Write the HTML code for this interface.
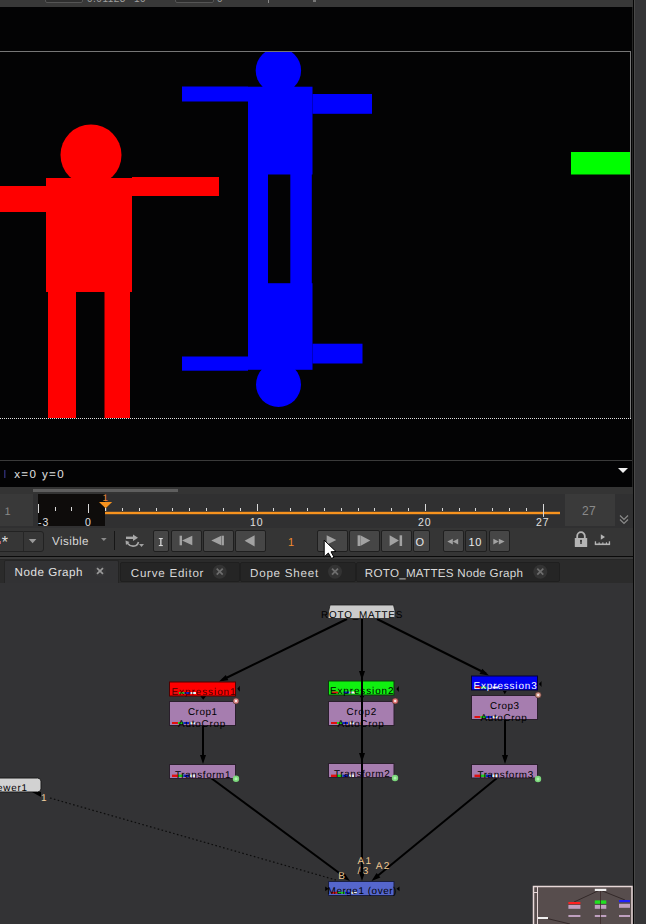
<!DOCTYPE html>
<html><head><meta charset="utf-8">
<style>
html,body{margin:0;padding:0;}
body{width:646px;height:924px;overflow:hidden;position:relative;background:#333335;font-family:"Liberation Sans",sans-serif;}
.a{position:absolute;}
.btn{position:absolute;top:530px;height:22px;background:#464646;border:1px solid #1f1f1f;border-radius:2px;box-sizing:border-box;}
.t{position:absolute;white-space:nowrap;line-height:1;}
.tab{position:absolute;top:561.5px;height:20px;background:#252525;border:1px solid #1f1f1f;border-radius:2px;box-sizing:border-box;}
svg{position:absolute;left:0;top:0;}
</style></head>
<body>
<!-- top strip -->
<div class="a" style="left:0;top:0;width:646px;height:7px;background:#383838"></div>
<div class="a" style="left:45px;top:-4px;width:38px;height:7px;background:#2e2e2e;border:1px solid #555;box-sizing:border-box;border-radius:2px"></div>
<div class="a" style="left:175px;top:-4px;width:39px;height:7px;background:#2e2e2e;border:1px solid #555;box-sizing:border-box;border-radius:2px"></div>

<div class="t" style="left:87px;top:-6.5px;font-size:10px;letter-spacing:0.5px;color:#a0a0a0">0.01123</div>
<div class="t" style="left:134px;top:-6.5px;font-size:10px;letter-spacing:0.5px;color:#a0a0a0">10</div>
<div class="t" style="left:217px;top:-6.5px;font-size:10px;color:#a0a0a0">0</div>
<div class="a" style="left:268px;top:0;width:1px;height:3px;background:#888"></div>
<div class="a" style="left:313px;top:0;width:3px;height:2px;background:#777"></div>
<!-- viewer -->
<div class="a" style="left:0;top:7px;width:632px;height:480px;background:#030304"></div>
<!-- right sliver panel -->
<div class="a" style="left:633px;top:0;width:1px;height:924px;background:#050505"></div>
<div class="a" style="left:632px;top:7px;width:1px;height:480px;background:#262626"></div>
<div class="a" style="left:634px;top:0;width:1px;height:924px;background:#484848"></div>
<div class="a" style="left:635px;top:0;width:11px;height:924px;background:#353537"></div>

<!-- timeline region -->
<div class="a" style="left:0;top:487px;width:633px;height:41px;background:#303031"></div>
<div class="a" style="left:0;top:487px;width:633px;height:7px;background:#343434"></div>
<div class="a" style="left:33px;top:489px;width:145px;height:3px;background:#5e5e5e"></div>
<div class="a" style="left:0;top:494px;width:33px;height:32px;background:#393939"></div>
<div class="a" style="left:38px;top:494px;width:67px;height:32px;background:#0e0c0b"></div>
<div class="a" style="left:565px;top:494px;width:50px;height:32px;background:#3a3a3a"></div>

<!-- toolbar -->
<div class="a" style="left:0;top:528px;width:633px;height:28px;background:#353535"></div>
<div class="a" style="left:0;top:556px;width:633px;height:1px;background:#0a0a0a"></div>
<!-- tab bar -->
<div class="a" style="left:0;top:557px;width:633px;height:26px;background:#2b2b2b"></div>
<div class="a" style="left:0;top:557px;width:633px;height:2px;background:#3a3a3a"></div>
<div class="a" style="left:0;top:559px;width:633px;height:1px;background:#262626"></div>
<div class="tab" style="left:119.5px;width:120px"></div>
<div class="tab" style="left:239.5px;width:116px"></div>
<div class="tab" style="left:355.5px;width:204px"></div>
<div class="a" style="left:4px;top:559.5px;width:114.5px;height:23.5px;background:#323234;border:1px solid #242424;border-bottom:none;border-radius:2px 2px 0 0;box-sizing:border-box"></div>

<svg width="646" height="924">
  <!-- viewer content -->
  <g fill="#ff0000">
    <circle cx="91" cy="155" r="30.5"/>
    <rect x="46" y="178" width="86" height="114"/>
    <rect x="0" y="186" width="46" height="26"/>
    <rect x="132" y="177" width="87" height="19"/>
    <rect x="48" y="292" width="28" height="126"/>
    <rect x="104.5" y="292" width="25.5" height="126"/>
  </g>
  <g fill="#0000ff">
    <clipPath id="vc"><rect x="0" y="52" width="631" height="367"/></clipPath><circle cx="278.4" cy="70.5" r="22.7" clip-path="url(#vc)"/>
    <rect x="182" y="86.5" width="66" height="15"/>
    <rect x="248" y="86.7" width="64.5" height="87.8"/>
    <rect x="312.5" y="94" width="59.5" height="19.8"/>
    <rect x="248" y="174" width="20" height="110"/>
    <rect x="290.3" y="174" width="21.5" height="110"/>
    <rect x="248" y="283.2" width="64.5" height="86.6"/>
    <rect x="312.5" y="343.7" width="50" height="19.8"/>
    <rect x="182" y="356.5" width="66" height="14.2"/>
    <circle cx="278.5" cy="384.5" r="22.5"/>
  </g>
  <rect x="571" y="152" width="59.5" height="22.5" fill="#00ff00"/>
  <!-- frame -->
  <line x1="0" y1="51.5" x2="631" y2="51.5" stroke="#767676" stroke-width="1"/>
  <line x1="630.5" y1="51" x2="630.5" y2="418" stroke="#767676" stroke-width="1"/>
  <line x1="0" y1="418.5" x2="631" y2="418.5" stroke="#e0e0e0" stroke-width="1" stroke-dasharray="1 1"/>
  <line x1="0" y1="460.5" x2="632" y2="460.5" stroke="#3a3a3a" stroke-width="1"/>
  <polygon points="618,468 628,468 623,473" fill="#f0f0f0"/>
  <rect x="4" y="470" width="1.5" height="8" fill="#2a2a6a"/>

  <!-- timeline -->
  <g fill="#d8d8d8">
    <rect x="38" y="504" width="1" height="9"/>
    <rect x="55" y="507" width="1" height="4"/>
    <rect x="71" y="507" width="1" height="4"/>
    <rect x="88" y="504" width="1" height="9"/>
    <rect x="122" y="508" width="1" height="3"/>
    <rect x="139" y="508" width="1" height="3"/>
    <rect x="156" y="508" width="1" height="3"/>
    <rect x="172" y="508" width="1" height="3"/>
    <rect x="189" y="508" width="1" height="3"/>
    <rect x="206" y="508" width="1" height="3"/>
    <rect x="223" y="508" width="1" height="3"/>
    <rect x="240" y="508" width="1" height="3"/>
    <rect x="257" y="504" width="1" height="7"/>
    <rect x="273" y="508" width="1" height="3"/>
    <rect x="290" y="508" width="1" height="3"/>
    <rect x="307" y="508" width="1" height="3"/>
    <rect x="324" y="508" width="1" height="3"/>
    <rect x="341" y="508" width="1" height="3"/>
    <rect x="358" y="508" width="1" height="3"/>
    <rect x="374" y="508" width="1" height="3"/>
    <rect x="391" y="508" width="1" height="3"/>
    <rect x="408" y="508" width="1" height="3"/>
    <rect x="425" y="504" width="1" height="7"/>
    <rect x="442" y="508" width="1" height="3"/>
    <rect x="459" y="508" width="1" height="3"/>
    <rect x="475" y="508" width="1" height="3"/>
    <rect x="492" y="508" width="1" height="3"/>
    <rect x="509" y="508" width="1" height="3"/>
    <rect x="526" y="508" width="1" height="3"/>
    <rect x="543" y="504" width="1" height="12.7"/>
  </g>
  <rect x="105" y="511.8" width="455" height="2.4" fill="#f7931e"/>
  <rect x="543" y="511" width="1" height="5.7" fill="#d8d8d8"/>
  <polygon points="99,502 112.2,502 105.6,508.3" fill="#f7931e"/>
  <rect x="105" y="508" width="1.2" height="3" fill="#e0e0e0"/>
  <!-- chevron -->
  <g fill="none" stroke="#8a8a8a" stroke-width="1.2">
    <polyline points="620,515.5 624,519.5 628,515.5"/>
    <polyline points="620,519.5 624,523.5 628,519.5"/>
  </g>
</svg>

<div class="t" style="left:14.2px;top:469.1px;font-size:11.6px;letter-spacing:1.37px;color:#e0e0e0;text-rendering:geometricPrecision;">x=0 y=0</div>
<!-- timeline labels -->
<div class="t" style="left:4.5px;top:506.5px;font-size:11px;color:#8a8a8a;text-rendering:geometricPrecision">1</div>
<div class="t" style="left:102.5px;top:494px;font-size:9.6px;color:#f08a30;text-rendering:geometricPrecision">1</div>
<div class="t" style="left:38px;top:516.5px;font-size:10.5px;color:#e0e0e0;letter-spacing:1px">-3</div>
<div class="t" style="left:85px;top:516.5px;font-size:10.5px;color:#e0e0e0">0</div>
<div class="t" style="left:250px;top:516.5px;font-size:10.5px;color:#e0e0e0;letter-spacing:1px">10</div>
<div class="t" style="left:418px;top:516.5px;font-size:10.5px;color:#e0e0e0;letter-spacing:1px">20</div>
<div class="t" style="left:536px;top:516.5px;font-size:10.5px;color:#e0e0e0;letter-spacing:1px">27</div>
<div class="t" style="left:582px;top:505px;font-size:12px;color:#8a8a8a;letter-spacing:0.3px">27</div>


<!-- toolbar controls -->
<div class="a" style="left:-3px;top:530.5px;width:47px;height:21px;background:#363636;border:1px solid #222;border-radius:3px;box-sizing:border-box"></div>
<div class="a" style="left:23px;top:531px;width:1px;height:20px;background:#262626"></div>
<div class="t" style="left:1.8px;top:535.3px;font-size:16px;color:#dcdcdc">*</div>
<div class="a" style="left:0;top:541px;width:1px;height:3px;background:#c06060"></div>
<div class="t" style="left:52px;top:536px;font-size:11.6px;letter-spacing:0.43px;color:#d8d8d8;text-rendering:geometricPrecision;">Visible</div>
<div class="a" style="left:113.5px;top:531px;width:1.2px;height:19px;background:#161616"></div>
<div class="btn" style="left:152.5px;width:16.5px"></div>
<div class="btn" style="left:170.5px;width:31px"></div>
<div class="btn" style="left:202.5px;width:31px"></div>
<div class="btn" style="left:234.5px;width:31px"></div>
<div class="btn" style="left:316.5px;width:31px"></div>
<div class="btn" style="left:348.5px;width:31px"></div>
<div class="btn" style="left:380.5px;width:31px"></div>
<div class="btn" style="left:412.5px;width:17px"></div>
<div class="btn" style="left:442.5px;width:21px"></div>
<div class="btn" style="left:464.8px;width:22px;background:#383838"></div>
<div class="btn" style="left:488.5px;width:21px"></div>
<div class="t" style="left:288px;top:536.5px;font-size:11px;color:#f08a30">1</div>
<div class="t" style="left:415.5px;top:536.8px;font-size:11px;color:#e8e8e8">O</div>
<div class="t" style="left:468.5px;top:536.5px;font-size:11px;letter-spacing:0.6px;color:#e8e8e8">10</div>
<svg width="646" height="924">
  <polygon points="28.8,539 36.4,539 32.6,543.2" fill="#9a9a9a"/>
  <polygon points="101,538 106.7,538 103.85,541" fill="#8a8a8a"/>
  <!-- sync icon -->
  <g fill="#a8a8a8" stroke="none">
    <rect x="126" y="536.6" width="8" height="2.4"/>
    <polygon points="133,534.5 138,537.8 133,541"/>
  </g>
  <path d="M127,543 Q131,547.5 136,545.5 Q138,544.5 138.5,542" fill="none" stroke="#a8a8a8" stroke-width="1.6"/>
  <polygon points="125.5,540.5 129.5,542 126,545" fill="#a8a8a8"/>
  <polygon points="139,544 144,544 141.5,547" fill="#a0a0a0"/>
  <!-- I glyph -->
  <g fill="#d8d8d8">
    <rect x="160.2" y="538" width="1.3" height="8"/>
    <rect x="158.8" y="538" width="4" height="1.1"/>
    <rect x="158.8" y="545" width="4" height="1.1"/>
  </g>
  <g fill="#a2a2a2">
    <!-- skip start -->
    <rect x="179.6" y="535.7" width="2.4" height="9.6"/>
    <polygon points="182,540.5 192.3,535.7 192.3,545.3"/>
    <!-- prev key -->
    <polygon points="211.3,540.5 221.2,535.7 221.2,545.3"/>
    <rect x="221.6" y="535.7" width="2.3" height="9.6"/>
    <!-- prev -->
    <polygon points="244.6,540.8 254.6,535.3 254.6,546.4"/>
    <!-- play -->
    <polygon points="326.7,535.2 336.3,540 326.7,544.8"/>
    <!-- next key -->
    <rect x="357.6" y="535.3" width="2.4" height="10.7"/>
    <polygon points="360.3,535.3 370.3,540.6 360.3,546"/>
    <!-- skip end -->
    <polygon points="389.6,535.3 398.9,540.6 389.6,546"/>
    <rect x="399.6" y="535.3" width="2.5" height="10.7"/>
    <!-- rewind 10 -->
    <polygon points="447.3,541.6 452.8,538.7 452.8,544.6"/>
    <polygon points="452.8,541.6 458.2,538.7 458.2,544.6"/>
    <!-- ff 10 -->
    <polygon points="493.3,538.7 498.8,541.6 493.3,544.6"/>
    <polygon points="498.8,538.7 504.6,541.6 498.8,544.6"/>
  </g>
  <!-- lock -->
  <g fill="#b4b4b4">
    <rect x="574.8" y="538" width="12.4" height="9" rx="0.6"/>
    <path d="M577.2,538 V536 A3.8,3.8 0 0 1 584.8,536 V538" fill="none" stroke="#b4b4b4" stroke-width="1.8"/>
  </g>
  <rect x="580.3" y="540.5" width="1.4" height="3.5" fill="#323232"/>
  <circle cx="581" cy="540.8" r="1" fill="#323232"/>
  <!-- ruler -->
  <g fill="#b4b4b4">
    <polygon points="600.8,534.2 605,537 600.8,539.7"/>
    <rect x="594.8" y="543.5" width="15.3" height="1.6"/>
    <rect x="594.8" y="541.3" width="1.3" height="3"/>
    <rect x="598.6" y="542.3" width="1.1" height="2"/>
    <rect x="602.3" y="542.3" width="1.1" height="2"/>
    <rect x="605.9" y="542.3" width="1.1" height="2"/>
    <rect x="608.8" y="541.3" width="1.3" height="3"/>
  </g>
  <!-- mouse cursor -->
  <path d="M324.2,540.2 L324.2,557 L328.3,553 L331.5,558.5 L334,557.2 L331,551.8 L336,551.5 Z" fill="#ffffff" stroke="#000" stroke-width="1"/>
</svg>
<!-- tabs text -->
<div class="t" style="left:14.6px;top:567.1px;font-size:11.6px;letter-spacing:0.53px;color:#e0e0e0;text-rendering:geometricPrecision;">Node Graph</div>
<div class="t" style="left:130.8px;top:567.7px;font-size:11.6px;letter-spacing:0.75px;color:#d8d8d8;text-rendering:geometricPrecision;">Curve Editor</div>
<div class="t" style="left:250px;top:567.7px;font-size:11.6px;letter-spacing:0.78px;color:#d8d8d8;text-rendering:geometricPrecision;">Dope Sheet</div>
<div class="t" style="left:364.8px;top:568.1px;font-size:11.6px;letter-spacing:0.28px;color:#d8d8d8;text-rendering:geometricPrecision;">ROTO_MATTES Node Graph</div>
<svg width="646" height="924">
  <circle cx="100" cy="571" r="6" fill="#363638"/>
  <g stroke="#9a9a9a" stroke-width="1.7">
    <line x1="97" y1="568.2" x2="103" y2="573.8"/><line x1="103" y1="568.2" x2="97" y2="573.8"/>
  </g>
  <g>
    <circle cx="219.7" cy="571.7" r="7" fill="#333333"/>
    <circle cx="335" cy="571.7" r="7" fill="#333333"/>
    <circle cx="540.3" cy="571.7" r="7" fill="#333333"/>
  </g>
  <g stroke="#6e6e6e" stroke-width="1.7">
    <line x1="216.7" y1="568.7" x2="222.7" y2="574.7"/><line x1="222.7" y1="568.7" x2="216.7" y2="574.7"/>
    <line x1="332" y1="568.7" x2="338" y2="574.7"/><line x1="338" y1="568.7" x2="332" y2="574.7"/>
    <line x1="537.3" y1="568.7" x2="543.3" y2="574.7"/><line x1="543.3" y1="568.7" x2="537.3" y2="574.7"/>
  </g>
</svg>

<svg width="646" height="924">
<line x1="347" y1="619" x2="222" y2="680" stroke="#000" stroke-width="2"/>
<polygon points="219.0,681.5 225.8,674.9 228.4,680.2" fill="#000"/>
<line x1="377" y1="619" x2="486" y2="673.5" stroke="#000" stroke-width="2"/>
<polygon points="489.0,675.5 479.6,674.1 482.3,668.8" fill="#000"/>
<line x1="203" y1="725" x2="203" y2="757" stroke="#000" stroke-width="2"/>
<polygon points="203.0,764.0 200.0,755.0 206.0,755.0" fill="#000"/>
<line x1="505" y1="719" x2="505" y2="757" stroke="#000" stroke-width="2"/>
<polygon points="505.0,764.0 502.0,755.0 508.0,755.0" fill="#000"/>
<line x1="211" y1="778" x2="346" y2="878" stroke="#000" stroke-width="2"/>
<polygon points="350.0,881.0 341.0,878.1 344.6,873.2" fill="#000"/>
<line x1="497" y1="778" x2="375" y2="878" stroke="#000" stroke-width="2"/>
<polygon points="371.5,881.0 376.6,873.0 380.4,877.6" fill="#000"/>
<line x1="50" y1="798" x2="336" y2="880" stroke="#0c0c0c" stroke-width="1.2" stroke-dasharray="1.6 2.4"/>
<path d="M328,618.5 L328.5,612 L330,605 L393.5,605 L395,611 L394.8,618.5 Z" fill="#cbcbcb" stroke="#1e1e1e" stroke-width="0.8"/>
<rect x="169.5" y="682" width="66.0" height="14" fill="#ff0000" stroke="#500000" stroke-width="1"/>
<rect x="169.5" y="701.5" width="66.0" height="24.0" fill="#a67daf" stroke="#2a1f2c" stroke-width="1"/>
<rect x="169.5" y="764.5" width="66.0" height="14.0" fill="#a67daf" stroke="#2a1f2c" stroke-width="1"/>
<rect x="328.5" y="681" width="65.5" height="14" fill="#10f010" stroke="#0a3a0a" stroke-width="1"/>
<rect x="328.5" y="701.5" width="65.5" height="24.0" fill="#a67daf" stroke="#2a1f2c" stroke-width="1"/>
<rect x="328.5" y="763.5" width="65.5" height="14.0" fill="#a67daf" stroke="#2a1f2c" stroke-width="1"/>
<rect x="471.5" y="676" width="66.0" height="14" fill="#0000f0" stroke="#00003a" stroke-width="1"/>
<rect x="471.5" y="695.5" width="66.0" height="24.0" fill="#a67daf" stroke="#2a1f2c" stroke-width="1"/>
<rect x="471.5" y="764.5" width="66.0" height="13.5" fill="#a67daf" stroke="#2a1f2c" stroke-width="1"/>
<rect x="328.5" y="881.5" width="65.5" height="14.0" fill="#5566cc" stroke="#1a1f40" stroke-width="1"/>
<path d="M-5,778 L37.5,778 Q40.5,778 41,781 L41,789 Q40.5,792 37.5,792 L-5,792 Z" fill="#d2d2d2" stroke="#1a1a1a" stroke-width="1"/>
<polygon points="32,792 41,792 41,797" fill="#000"/>
<rect x="173" y="692" width="6" height="2" fill="#e01010"/><rect x="179" y="692" width="5.5" height="2" fill="#20d020"/><rect x="184.5" y="692" width="6" height="2" fill="#1020d0"/><rect x="190.5" y="692" width="5.5" height="2" fill="#f0f0f0"/>
<rect x="172" y="722" width="6" height="2" fill="#e01010"/><rect x="178" y="722" width="5.5" height="2" fill="#20d020"/><rect x="183.5" y="722" width="6" height="2" fill="#1020d0"/><rect x="189.5" y="722" width="5.5" height="2" fill="#f0f0f0"/>
<rect x="172" y="774.6" width="6" height="2.4" fill="#e01010"/><rect x="178" y="774.6" width="5.5" height="2.4" fill="#20d020"/><rect x="183.5" y="774.6" width="6" height="2.4" fill="#1020d0"/><rect x="189.5" y="774.6" width="5.5" height="2.4" fill="#f0f0f0"/>
<rect x="332" y="691.5" width="6" height="2" fill="#e01010"/><rect x="338" y="691.5" width="5.5" height="2" fill="#20d020"/><rect x="343.5" y="691.5" width="6" height="2" fill="#1020d0"/><rect x="349.5" y="691.5" width="5.5" height="2" fill="#f0f0f0"/>
<rect x="331" y="722" width="6" height="2" fill="#e01010"/><rect x="337" y="722" width="5.5" height="2" fill="#20d020"/><rect x="342.5" y="722" width="6" height="2" fill="#1020d0"/><rect x="348.5" y="722" width="5.5" height="2" fill="#f0f0f0"/>
<rect x="331" y="774.6" width="6" height="2.4" fill="#e01010"/><rect x="337" y="774.6" width="5.5" height="2.4" fill="#20d020"/><rect x="342.5" y="774.6" width="6" height="2.4" fill="#1020d0"/><rect x="348.5" y="774.6" width="5.5" height="2.4" fill="#f0f0f0"/>
<rect x="475" y="686.5" width="6" height="2" fill="#e01010"/><rect x="481" y="686.5" width="5.5" height="2" fill="#20d020"/><rect x="486.5" y="686.5" width="6" height="2" fill="#1020d0"/><rect x="492.5" y="686.5" width="5.5" height="2" fill="#f0f0f0"/>
<rect x="474.5" y="716" width="6" height="2" fill="#e01010"/><rect x="480.5" y="716" width="5.5" height="2" fill="#20d020"/><rect x="486.0" y="716" width="6" height="2" fill="#1020d0"/><rect x="492.0" y="716" width="5.5" height="2" fill="#f0f0f0"/>
<rect x="474.5" y="774.6" width="6" height="2.4" fill="#e01010"/><rect x="480.5" y="774.6" width="5.5" height="2.4" fill="#20d020"/><rect x="486.0" y="774.6" width="6" height="2.4" fill="#1020d0"/><rect x="492.0" y="774.6" width="5.5" height="2.4" fill="#f0f0f0"/>
<rect x="331" y="891.8" width="6.4" height="2" fill="#e01010"/><rect x="337.4" y="891.8" width="7.6" height="2" fill="#20d020"/><rect x="345" y="891.8" width="5.6" height="2" fill="#1020d0"/><rect x="350.6" y="891.8" width="6.4" height="2" fill="#f0f0f0"/>
<polygon points="200.4,696.3 206,696.3 203.2,699.8" fill="#000"/>
<polygon points="359.7,696 364.3,696 362,699.3" fill="#000"/>
<polygon points="502.9,691 506.7,691 504.8,694.3" fill="#000"/>
<polygon points="237.3,688.7 239.8,685.7 239.8,691.7" fill="#000"/>
<polygon points="396.3,689 398.8,686 398.8,692" fill="#000"/>
<polygon points="539,684 541.5,681 541.5,687" fill="#000"/>
<polygon points="325.2,886.4 328.5,888.8 325.2,891.3" fill="#000"/>
<polygon points="399.5,886.4 396.5,888.8 399.5,891.3" fill="#000"/>
<circle cx="236" cy="701" r="3" fill="#d88080" stroke="#4a2a2a" stroke-width="0.6"/><circle cx="236" cy="701" r="1.2" fill="#f4e8e8"/>
<circle cx="395.2" cy="701" r="3" fill="#e07070" stroke="#4a2a2a" stroke-width="0.6"/><circle cx="395.2" cy="701" r="1.2" fill="#f4e8e8"/>
<circle cx="538.2" cy="695" r="3" fill="#c89080" stroke="#4a2a2a" stroke-width="0.6"/><circle cx="538.2" cy="695" r="1.2" fill="#f4e8e8"/>
<circle cx="236" cy="778.7" r="3.2" fill="#7cd87c"/><circle cx="236" cy="778.7" r="1.5" fill="#b0f0b0"/>
<circle cx="395" cy="778" r="3.2" fill="#7cd87c"/><circle cx="395" cy="778" r="1.5" fill="#b0f0b0"/>
<circle cx="538" cy="779" r="3.2" fill="#7cd87c"/><circle cx="538" cy="779" r="1.5" fill="#b0f0b0"/>
<line x1="362" y1="619" x2="362" y2="873" stroke="#000" stroke-width="2"/>
<polygon points="362.0,680.0 359.0,671.0 365.0,671.0" fill="#000"/>
<polygon points="362.0,762.0 359.0,753.0 365.0,753.0" fill="#000"/>
<polygon points="362.0,881.0 359.0,872.0 365.0,872.0" fill="#000"/>
</svg>

<div class="t" style="left:321px;top:611px;font-size:9.9px;letter-spacing:0.82px;color:#000;text-rendering:geometricPrecision;">ROTO_MATTES</div>
<div class="t" style="left:171.5px;top:688px;font-size:9.9px;letter-spacing:0.97px;color:#4a0000;text-rendering:geometricPrecision;">Expression1</div>
<div class="t" style="left:187.9px;top:708px;font-size:9.9px;letter-spacing:0.55px;color:#000;text-rendering:geometricPrecision;">Crop1</div>
<div class="t" style="left:178px;top:720px;font-size:9.9px;letter-spacing:0.79px;color:#000;text-rendering:geometricPrecision;">AutoCrop</div>
<div class="t" style="left:175px;top:771.2px;font-size:9.9px;letter-spacing:0.59px;color:#000;text-rendering:geometricPrecision;">Transform1</div>
<div class="t" style="left:330px;top:686.5px;font-size:9.9px;letter-spacing:0.91px;color:#000;text-rendering:geometricPrecision;">Expression2</div>
<div class="t" style="left:346.5px;top:708px;font-size:9.9px;letter-spacing:0.72px;color:#000;text-rendering:geometricPrecision;">Crop2</div>
<div class="t" style="left:337.4px;top:720.2px;font-size:9.9px;letter-spacing:0.66px;color:#000;text-rendering:geometricPrecision;">AutoCrop</div>
<div class="t" style="left:334px;top:770.3px;font-size:9.9px;letter-spacing:0.62px;color:#000;text-rendering:geometricPrecision;">Transform2</div>
<div class="t" style="left:473.6px;top:681.8px;font-size:9.9px;letter-spacing:0.87px;color:#ffffff;text-rendering:geometricPrecision;">Expression3</div>
<div class="t" style="left:490px;top:702px;font-size:9.9px;letter-spacing:0.55px;color:#000;text-rendering:geometricPrecision;">Crop3</div>
<div class="t" style="left:480.6px;top:714px;font-size:9.9px;letter-spacing:0.63px;color:#000;text-rendering:geometricPrecision;">AutoCrop</div>
<div class="t" style="left:477.4px;top:770.8px;font-size:9.9px;letter-spacing:0.63px;color:#000;text-rendering:geometricPrecision;">Transform3</div>
<div class="t" style="left:327.6px;top:887.4px;font-size:9.9px;letter-spacing:0.56px;color:#000;text-rendering:geometricPrecision;">Merge1 (over)</div>
<div class="t" style="left:-13px;top:783.9px;font-size:9.9px;letter-spacing:0.75px;color:#000;text-rendering:geometricPrecision;">Viewer1</div>
<div class="t" style="left:41px;top:794.1px;font-size:10px;letter-spacing:0px;color:#f0d0a0;text-rendering:geometricPrecision;">1</div>
<div class="t" style="left:357.6px;top:857px;font-size:10px;letter-spacing:1.2px;color:#f0c890;text-rendering:geometricPrecision;">A1</div>
<div class="t" style="left:357.6px;top:866.6px;font-size:10px;letter-spacing:2.5px;color:#f0c890;text-rendering:geometricPrecision;">/3</div>
<div class="t" style="left:375.7px;top:861.7px;font-size:10px;letter-spacing:1.3px;color:#f0c890;text-rendering:geometricPrecision;">A2</div>
<div class="t" style="left:338.3px;top:872.1px;font-size:10px;letter-spacing:0px;color:#f0c890;text-rendering:geometricPrecision;">B</div>
<svg width="646" height="924">
  <rect x="533.5" y="886.5" width="98.5" height="40" fill="#574d4d" stroke="#e8d8d8" stroke-width="1.5"/>
  <rect x="533.5" y="886.5" width="4" height="40" fill="none" stroke="#e8d8d8" stroke-width="1"/>
  <rect x="533.5" y="886.5" width="4" height="6" fill="none" stroke="#e8d8d8" stroke-width="1"/>
  <g stroke="#2a2020" stroke-width="0.8" fill="none">
    <line x1="600" y1="890" x2="574" y2="902"/>
    <line x1="600" y1="890" x2="625" y2="900"/>
    
    <line x1="545" y1="918" x2="570" y2="924"/>
  </g>
  <rect x="594.8" y="888.8" width="11.5" height="2.2" fill="#f0f0f0"/>
  <rect x="568.4" y="902" width="12" height="2.2" fill="#ff2020"/>
  <rect x="568.4" y="905" width="12" height="3.8" fill="#bfa0bf"/>
  <rect x="594.8" y="900.4" width="11.5" height="3.4" fill="#20e020"/>
  <rect x="594.8" y="905" width="11.5" height="3.8" fill="#bfa0bf"/>
  <rect x="619" y="900" width="11" height="2.2" fill="#2020ff"/>
  <rect x="619" y="903.8" width="11" height="4" fill="#bfa0bf"/>
  <rect x="568.4" y="915" width="12" height="2" fill="#bfa0bf"/>
  <rect x="594.8" y="915" width="11.5" height="2" fill="#bfa0bf"/>
  <rect x="619" y="915" width="11" height="2" fill="#bfa0bf"/>
  <rect x="538" y="917" width="10" height="2" fill="#f0f0f0"/>
  <line x1="600.5" y1="891" x2="600.5" y2="924" stroke="#3a2a2a" stroke-width="0.8"/>
</svg>

</body></html>
